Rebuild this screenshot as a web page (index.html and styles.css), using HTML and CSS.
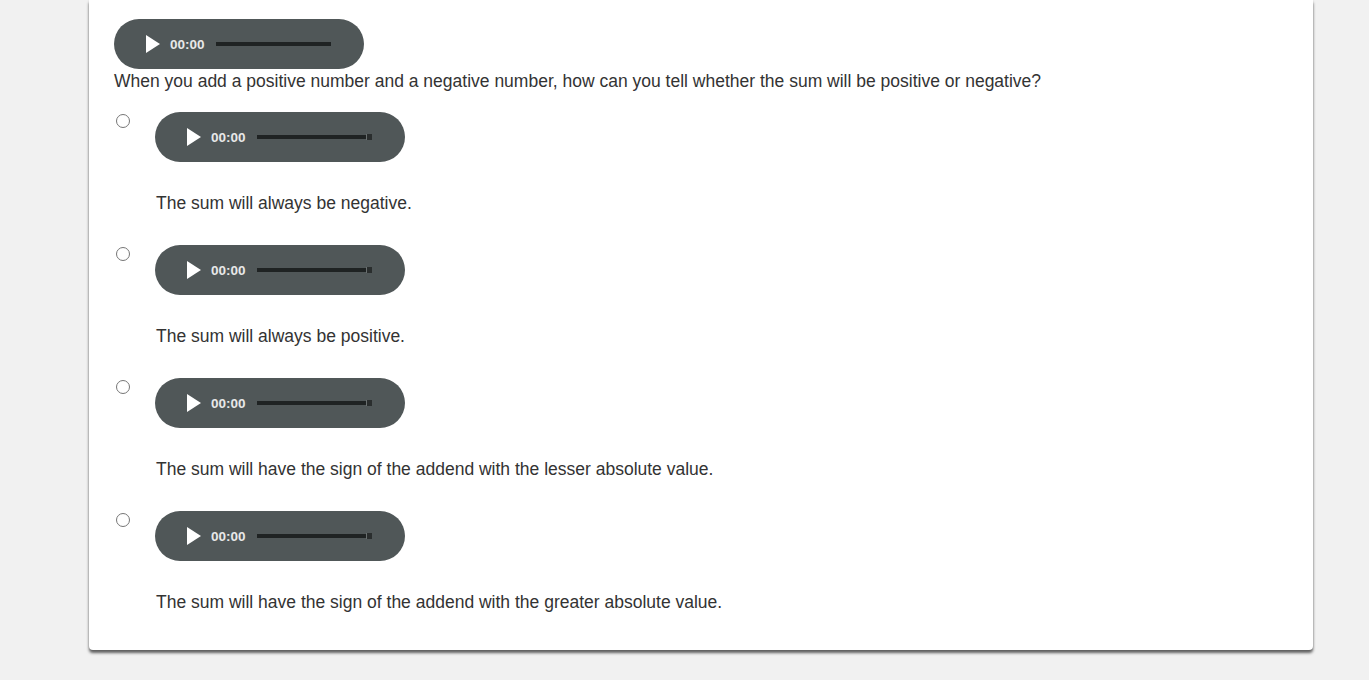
FILE: index.html
```html
<!DOCTYPE html>
<html lang="en">
<head>
<meta charset="UTF-8" />
<title>Question</title>
<link rel="stylesheet" href="styles.css">
</head>
<body>

<div class="card">
  <div class="player">
    <svg class="play" width="14" height="18" viewBox="0 0 14 18"><path d="M0 0 L14 9 L0 18 Z" fill="#fff"/></svg>
    <span class="time">00:00</span>
    <span class="track"></span>
  </div>
  <p class="question">When you add a positive number and a negative number, how can you tell whether the sum will be positive or negative?</p>

  <div class="options">
    <div class="option">
      <span class="radio"></span>
      <div class="body">
        <div class="player">
          <svg class="play" width="14" height="18" viewBox="0 0 14 18"><path d="M0 0 L14 9 L0 18 Z" fill="#fff"/></svg>
          <span class="time">00:00</span>
          <span class="track"><i class="mark"></i></span>
        </div>
        <p class="answer">The sum will always be negative.</p>
      </div>
    </div>
    <div class="option">
      <span class="radio"></span>
      <div class="body">
        <div class="player">
          <svg class="play" width="14" height="18" viewBox="0 0 14 18"><path d="M0 0 L14 9 L0 18 Z" fill="#fff"/></svg>
          <span class="time">00:00</span>
          <span class="track"><i class="mark"></i></span>
        </div>
        <p class="answer">The sum will always be positive.</p>
      </div>
    </div>
    <div class="option">
      <span class="radio"></span>
      <div class="body">
        <div class="player">
          <svg class="play" width="14" height="18" viewBox="0 0 14 18"><path d="M0 0 L14 9 L0 18 Z" fill="#fff"/></svg>
          <span class="time">00:00</span>
          <span class="track"><i class="mark"></i></span>
        </div>
        <p class="answer">The sum will have the sign of the addend with the lesser absolute value.</p>
      </div>
    </div>
    <div class="option">
      <span class="radio"></span>
      <div class="body">
        <div class="player">
          <svg class="play" width="14" height="18" viewBox="0 0 14 18"><path d="M0 0 L14 9 L0 18 Z" fill="#fff"/></svg>
          <span class="time">00:00</span>
          <span class="track"><i class="mark"></i></span>
        </div>
        <p class="answer">The sum will have the sign of the addend with the greater absolute value.</p>
      </div>
    </div>
  </div>
</div>

</body>
</html>
```

FILE: styles.css
```css
:root {
  --page-bg: #f1f1f1;
  --text-color: #333;
  --player-bg: #505758;
  --track-color: #1f2323;
}
html {
  background-color: var(--page-bg);
}
body {
  color: var(--text-color);
  font-family: "Liberation Sans", Arial, sans-serif;
  font-size: 17.5px;
  margin: 0;
  padding-bottom: 30px;
}
.card {
  width: 1224px;
  margin-left: 89px;
  box-sizing: border-box;
  background: #fff;
  border-radius: 0 0 4px 4px;
  box-shadow: 0 3px 3px rgba(0, 0, 0, 0.6), 0 0 2px rgba(0, 0, 0, 0.1);
  padding: 19px 25px 38px;
}
.player {
  width: 250px;
  height: 50px;
  border-radius: 25px;
  background: var(--player-bg);
  display: flex;
  align-items: center;
  padding-left: 32px;
  box-sizing: border-box;
}
.play {
  display: block;
}
.time {
  color: #e8e8e8;
  font-weight: bold;
  font-size: 13.5px;
  margin-left: 10px;
}
.track {
  position: relative;
  width: 115px;
  height: 4px;
  margin-left: 11px;
  background: var(--track-color);
}
.mark {
  position: absolute;
  right: 0;
  top: -1px;
  width: 5px;
  height: 6px;
  background: #2a2e2e;
  border-left: 1px solid #6a7070;
}
.question {
  margin: 2px 0 0;
  line-height: 20px;
}
.options {
  margin-top: 21px;
}
.option {
  display: flex;
  gap: 25px;
  margin-bottom: 32px;
}
.option:last-child {
  margin-bottom: 0;
}
.radio {
  width: 14px;
  height: 14px;
  margin: 2px 0 0 2px;
  border: 1px solid #767676;
  border-radius: 50%;
  box-sizing: border-box;
  flex: none;
}
.answer {
  margin: 31px 0 0 1px;
  line-height: 20px;
}
```
